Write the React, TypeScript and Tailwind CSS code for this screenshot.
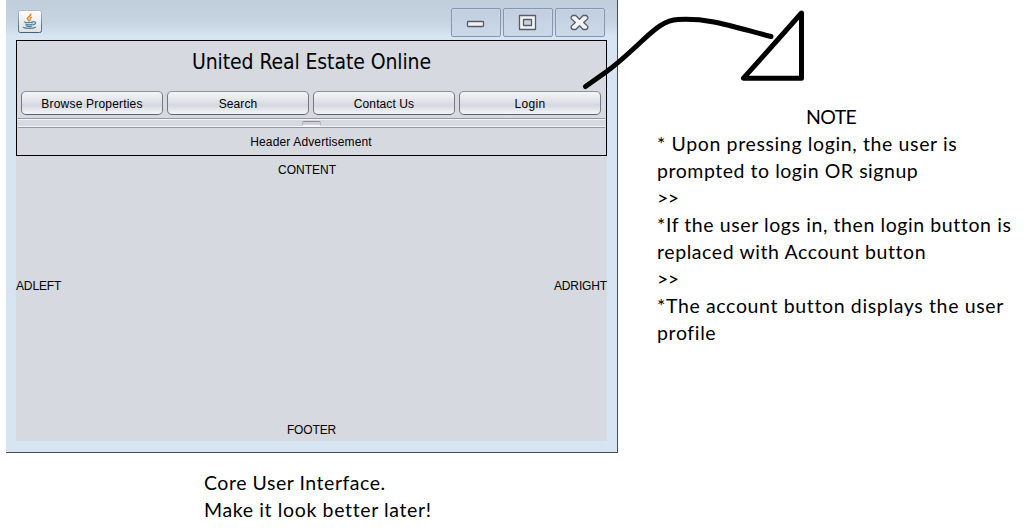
import type { ReactNode } from 'react'

const navItems = [
  { label: 'Browse Properties', spacing: 'tracking-[0.19px]' },
  { label: 'Search', spacing: 'tracking-[0.1px]' },
  { label: 'Contact Us', spacing: 'tracking-[0.1px]' },
  { label: 'Login', spacing: 'tracking-[0.3px]' },
]

const noteLines = [
  { text: '* Upon pressing login, the user is', spacing: 'tracking-[0.63px]' },
  { text: 'prompted to login OR signup', spacing: 'tracking-[0.54px]' },
  { text: '>>', spacing: 'tracking-[-0.5px]' },
  { text: '*If the user logs in, then login button is', spacing: 'tracking-[0.59px]' },
  { text: 'replaced with Account button', spacing: 'tracking-[0.58px]' },
  { text: '>>', spacing: 'tracking-[-0.5px]' },
  { text: '*The account button displays the user', spacing: 'tracking-[0.64px]' },
  { text: 'profile', spacing: 'tracking-[0.63px]' },
]

function JavaIcon() {
  return (
    <svg viewBox="0 0 24 24" className="h-6 w-6">
      <defs>
        <linearGradient id="tile" x1="0" y1="0" x2="0" y2="1">
          <stop offset="0" stopColor="#fdfdfd" />
          <stop offset="1" stopColor="#dfe0e2" />
        </linearGradient>
        <linearGradient id="tileEdge" x1="0" y1="0" x2="0" y2="1">
          <stop offset="0" stopColor="#a9bccb" />
          <stop offset="1" stopColor="#46627a" />
        </linearGradient>
      </defs>
      <rect x="0.5" y="0.5" width="23" height="22" rx="1.8" fill="url(#tile)" stroke="url(#tileEdge)" />
      <g fill="none" strokeLinecap="round">
        <path d="M12.6 4.4C13.2 6.2 9.2 7 9.4 8.7C9.6 9.8 11 9.8 11 10.8" stroke="#ef8426" strokeWidth="1.7" />
        <path d="M13.6 7.4C12 8 11.8 8.8 12.5 10" stroke="#ef8426" strokeWidth="1.2" />
        <path d="M6.4 11.9C8 12.8 13.2 12.7 15 11.9M7.5 14C9.4 14.8 12.8 14.8 14.3 14M8.2 15.9C9.6 16.6 12.6 16.6 13.8 15.9M15.4 11.7C18.4 11.3 18.4 14.2 15.2 14.9" stroke="#5382a1" strokeWidth="1.2" />
        <path d="M5.2 17.3C7.5 18.8 15 18.7 17.6 17.2" stroke="#5382a1" strokeWidth="1.2" />
      </g>
    </svg>
  )
}

function WindowControl({ children }: { children: ReactNode }) {
  return (
    <div className="h-[29px] w-[50px] rounded-[2px] border border-[#8595b4] bg-gradient-to-b from-[#c0cedf] to-[#cbd9e8] shadow-[inset_0_0_0_1px_#c8d6e6]">
      <svg viewBox="0 0 48 27" className="h-[27px] w-[48px]">
        {children}
      </svg>
    </div>
  )
}

function Splitter() {
  return (
    <div className="mx-px mt-[3px] flex h-[10px] justify-center border-y border-[#95989f] shadow-[inset_0_1px_0_#f4f5f8,inset_0_-1px_0_#f4f5f8]">
      <div className="mt-[2px] h-[5px] w-[19px] rounded-[2px] border border-x-[#b4b7be] border-t-[#8d9097] border-b-[#fafafb] bg-[#cdd0d7]" />
    </div>
  )
}

function AppWindow() {
  return (
    <section className="ml-[6px] flex h-[453px] w-[612px] flex-col border-r border-b border-[#4b4d52] bg-[#d7e4f1] font-['Liberation_Sans',sans-serif] text-[12px] leading-[14px]">
      <div className="flex h-10 shrink-0 justify-between bg-[linear-gradient(to_bottom,#c1cfdc_0,#c6d3e0_22px,#d7e4f1_36px)] pl-3 pr-3">
        <div className="pt-[10px]">
          <JavaIcon />
        </div>
        <div className="flex gap-[2px] pt-[8px]">
          <WindowControl>
            <rect x="15.5" y="12.5" width="16" height="5" rx="0.8" fill="#f3f3f3" stroke="#565c68" strokeWidth="1.3" />
          </WindowControl>
          <WindowControl>
            <path d="M15.5 6.5H31.5V20.5H15.5ZM19.5 10.5V16.5H27.5V10.5Z" fillRule="evenodd" fill="#f3f3f3" stroke="#565c68" strokeWidth="1.3" strokeLinejoin="round" />
          </WindowControl>
          <WindowControl>
            <path d="M16.5 6.5H19.8L23.5 10.2L27.2 6.5H30.5L31.8 8V9.6L27.7 13.5L31.8 17.4V19L30.5 20.5H27.2L23.5 16.8L19.8 20.5H16.5L15.2 19V17.4L19.3 13.5L15.2 9.6V8Z" fill="#f3f3f3" stroke="#565c68" strokeWidth="1.3" strokeLinejoin="round" />
          </WindowControl>
        </div>
      </div>

      <div className="ml-[10px] mr-[10px] flex h-[401px] flex-col bg-[#d6d9e0]">
        <header className="flex h-[116px] shrink-0 flex-col border border-black">
          <h1 className="flex h-[50px] items-center justify-center pb-[9px] font-['DejaVu_Sans_Condensed','DejaVu_Sans',sans-serif] text-[21px] font-normal [font-stretch:condensed] tracking-[-0.1px]">
            United Real Estate Online
          </h1>
          <nav className="flex gap-1 pl-1">
            {navItems.map((item) => (
              <button
                key={item.label}
                className={`h-6 w-[142px] rounded-[5px] border border-t-[#8f9299] border-r-[#74777e] border-b-[#5f6269] border-l-[#74777e] bg-[linear-gradient(to_bottom,#f4f5f8_0%,#e1e4e9_40%,#d5d8df_60%,#f5f6fa_100%)] pt-[2px] ${item.spacing}`}
              >
                {item.label}
              </button>
            ))}
          </nav>
          <Splitter />
          <p className="flex flex-1 items-center justify-center pt-px pr-px tracking-[0.14px]">Header Advertisement</p>
        </header>
        <div className="flex min-h-0 flex-1 items-stretch">
          <aside className="flex items-center pb-[7px] tracking-[-0.14px]">ADLEFT</aside>
          <main className="flex-1 pt-[7px] pr-px text-center">CONTENT</main>
          <aside className="flex items-center pb-[7px] tracking-[-0.14px]">ADRIGHT</aside>
        </div>
        <footer className="pb-[4px] text-center tracking-[-0.14px]">FOOTER</footer>
      </div>
    </section>
  )
}

function PointerSketch() {
  return (
    <svg
      viewBox="0 0 250 100"
      className="pointer-events-none absolute left-[570px] top-0 h-[100px] w-[250px]"
      fill="none"
      stroke="#000"
      strokeWidth="5"
      strokeLinecap="round"
      strokeLinejoin="round"
    >
      <path d="M15.5 86.5L36 72C50 62 61 51 73 40C83 31 94 20 108 19.5C139 18 157 25 201 36.5" />
      <path d="M231.5 13L173.5 78.2H231.5Z" />
    </svg>
  )
}

export default function App() {
  return (
    <div className="relative h-[532px] w-[1027px] overflow-hidden bg-white text-black">
      <div className="flex">
        <div>
          <AppWindow />
          <div className="ml-[204px] mt-[16px] font-[Lato,sans-serif] text-[19.5px] leading-[27px]">
            <p className="tracking-[0.53px]">Core User Interface.</p>
            <p className="tracking-[0.63px]">Make it look better later!</p>
          </div>
        </div>
        <aside className="ml-[39px] mt-[103px] w-[368px] whitespace-nowrap font-[Lato,sans-serif] text-[19.5px] leading-[27px]">
          <h2 className="pl-[149px] tracking-[-0.6px]">NOTE</h2>
          {noteLines.map((line, i) => (
            <p key={i} className={line.spacing}>
              {line.text}
            </p>
          ))}
        </aside>
      </div>
      <PointerSketch />
    </div>
  )
}
